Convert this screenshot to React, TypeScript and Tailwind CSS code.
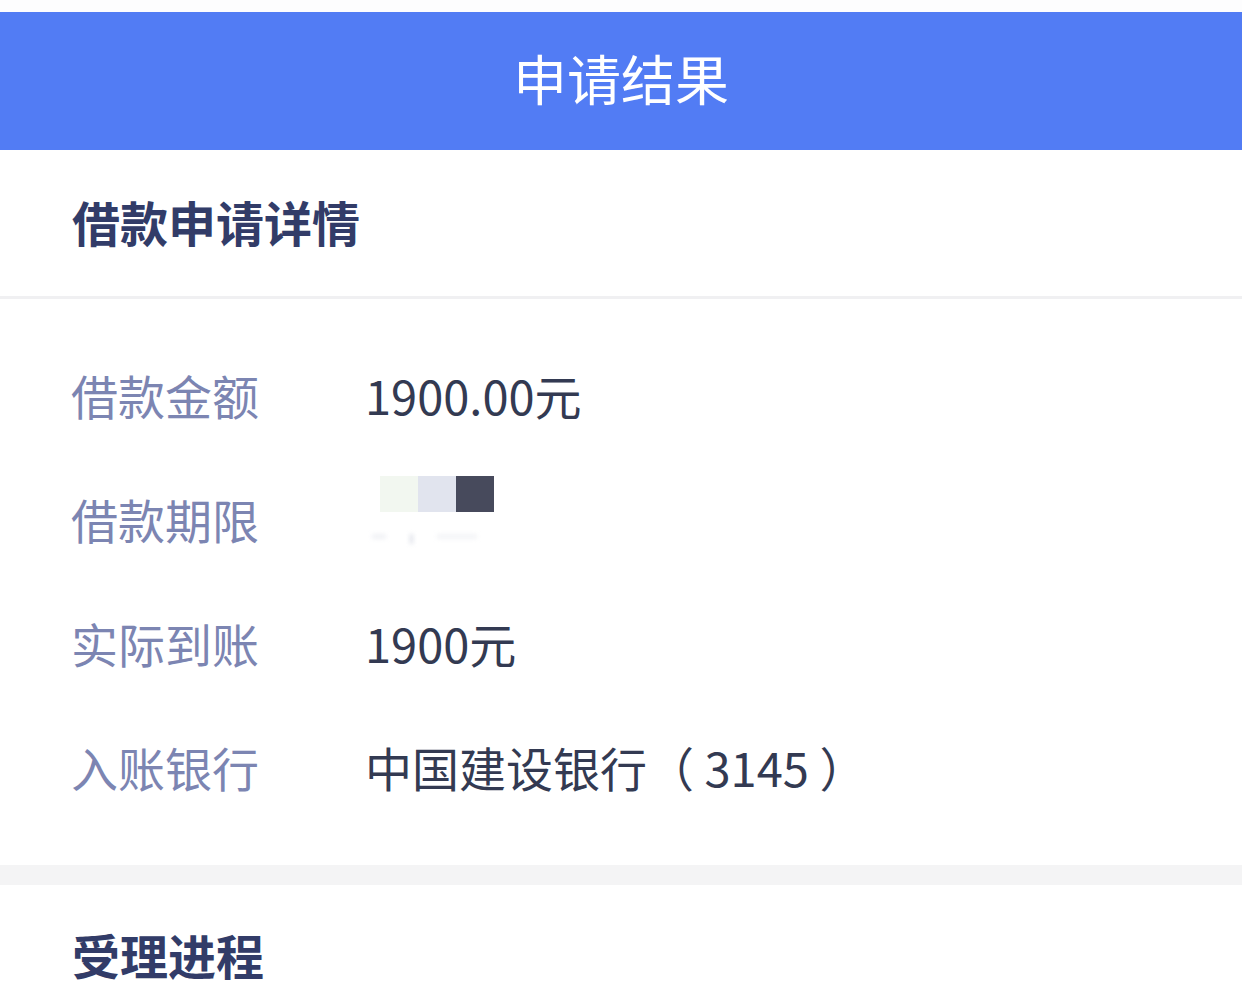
const font = { fontFamily: '"Noto Sans CJK SC", "Noto Sans", sans-serif' };

const rows = [
	{ label: '借款金额', value: '1900.00元' },
	{ label: '借款期限', value: null },
	{ label: '实际到账', value: '1900元' },
	{ label: '入账银行', value: '中国建设银行（ 3145 ）' },
];

function Masked() {
	return (
		<div className="flex flex-col self-start pt-[20px] pl-[15px]">
			<div className="flex">
				<div className="h-[36px] w-[38px] bg-[#f2f7f0]" />
				<div className="h-[36px] w-[38px] bg-[#e1e4ee]" />
				<div className="h-[36px] w-[38px] bg-[#474a5c]" />
			</div>
			<div className="mt-[22px] ml-[-8px] flex gap-6 blur-[2px]">
				<div className="h-[5px] w-[14px] bg-[#f0f1f5]" />
				<div className="h-[10px] w-[3px] bg-[#dcdfe7]" />
				<div className="h-[5px] w-[40px] bg-[#f3f4f7]" />
			</div>
		</div>
	);
}

export default function App() {
	return (
		<div className="w-[1242px] h-[1007px] overflow-hidden bg-white" style={font}>
			<div className="h-[12px] bg-[#fdfdfe]" />
			<header className="flex h-[138px] items-center justify-center bg-[#527cf4] pb-[6px]">
				<h1 className="text-[54px] leading-none text-white">申请结果</h1>
			</header>

			<section className="flex h-[149px] items-center border-b-[3px] border-[#f0f0f2] px-[72px] pb-[4px]">
				<h2 className="text-[48px] font-bold leading-none text-[#323c68]">借款申请详情</h2>
			</section>

			<div className="flex flex-col pt-[33px] pb-[37px]">
				{rows.map((row) => (
					<div key={row.label} className="flex h-[124px] items-center px-[71px]">
						<span className="w-[294px] text-[47px] leading-none text-[#7c85b2]">{row.label}</span>
						{row.value ? (
							<span className="text-[47px] leading-none text-[#333a52]">{row.value}</span>
						) : (
							<Masked />
						)}
					</div>
				))}
			</div>

			<div className="h-[20px] bg-[#f4f4f5]" />

			<section className="flex h-[144px] items-center px-[72px] pb-[6px]">
				<h2 className="text-[48px] font-bold leading-none text-[#323c68]">受理进程</h2>
			</section>
		</div>
	);
}
